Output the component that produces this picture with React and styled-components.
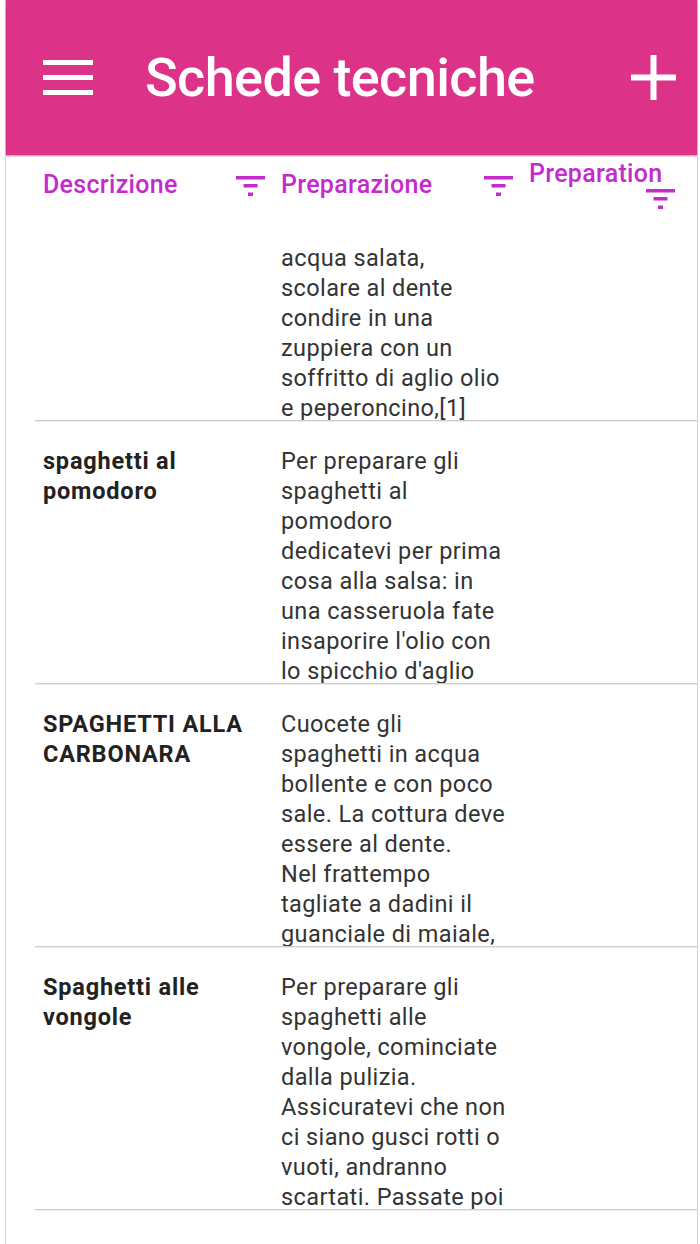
import React from "react";
import styled, { createGlobalStyle } from "styled-components";

const Globale = createGlobalStyle`
    body {
        margin: 0;
        background: #ffffff;
        font-family: Roboto, "Liberation Sans", sans-serif;
    }
`;

// le righe vanno a capo come nell'app originale
const righe = [
    {
        nome: "",
        testo: "Si preparano lessando gli\nspaghetti in abbondante\nacqua salata,\nscolare al dente\ncondire in una\nzuppiera con un\nsoffritto di aglio olio\ne peperoncino,[1]",
        coda: true,
    },
    {
        nome: "spaghetti al pomodoro",
        testo: "Per preparare gli\nspaghetti al\npomodoro\ndedicatevi per prima\ncosa alla salsa: in\nuna casseruola fate\ninsaporire l'olio con\nlo spicchio d'aglio\nsbucciato.",
    },
    {
        nome: "SPAGHETTI ALLA CARBONARA",
        testo: "Cuocete gli\nspaghetti in acqua\nbollente e con poco\nsale. La cottura deve\nessere al dente.\nNel frattempo\ntagliate a dadini il\nguanciale di maiale,\ne fatelo rosolare.",
    },
    {
        nome: "Spaghetti alle vongole",
        testo: "Per preparare gli\nspaghetti alle\nvongole, cominciate\ndalla pulizia.\nAssicuratevi che non\nci siano gusci rotti o\nvuoti, andranno\nscartati. Passate poi\nle vongole.",
    },
];

const IconaFiltro = () => (
    <svg width="29" height="20" viewBox="0 0 29 20">
        <rect x="0" y="0" width="29" height="3.5" fill="currentColor" />
        <rect x="7.5" y="8" width="14" height="3.5" fill="currentColor" />
        <rect x="12" y="16.5" width="5" height="3.5" fill="currentColor" />
    </svg>
);

const IconaMenu = () => (
    <svg width="50" height="35" viewBox="0 0 50 35">
        <rect x="0" y="0" width="50" height="5" fill="#ffffff" />
        <rect x="0" y="15" width="50" height="5" fill="#ffffff" />
        <rect x="0" y="30" width="50" height="5" fill="#ffffff" />
    </svg>
);

const IconaPiu = () => (
    <svg width="45" height="45" viewBox="0 0 45 45">
        <rect x="0" y="19.5" width="45" height="6" fill="#ffffff" />
        <rect x="19.5" y="0" width="6" height="45" fill="#ffffff" />
    </svg>
);

const App = () => {
    return (
        <>
            <Globale />
            <Cornice>
                <Testata>
                    <IconaMenu />
                    <Titolo>Schede tecniche</Titolo>
                    <IconaPiu />
                </Testata>
                <Tabella>
                    <Intestazione>
                        <CellaTitolo>
                            <Etichetta>Descrizione</Etichetta>
                            <Filtro><IconaFiltro /></Filtro>
                        </CellaTitolo>
                        <CellaTitolo>
                            <Etichetta>Preparazione</Etichetta>
                            <Filtro><IconaFiltro /></Filtro>
                        </CellaTitolo>
                        <CellaTitolo $ultima>
                            <Etichetta>Preparation</Etichetta>
                            <Filtro><IconaFiltro /></Filtro>
                        </CellaTitolo>
                    </Intestazione>
                    {righe.map((r, i) => (
                        <Riga key={i} $coda={r.coda}>
                            <Nome>{r.nome}</Nome>
                            <Preparazione $coda={r.coda}>
                                <Testo $coda={r.coda}>{r.testo}</Testo>
                            </Preparazione>
                            <div />
                        </Riga>
                    ))}
                </Tabella>
            </Cornice>
        </>
    );
}

const Cornice = styled.div`
    margin: 0 2px 0 5px;
    min-height: 1244px;
    border-left: 1px solid #d4d4d4;
    border-right: 1px solid #d4d4d4;
    box-sizing: border-box;
`;

const Testata = styled.header`
    height: 155px;
    background-color: #dc3288;
    display: flex;
    align-items: center;
    padding: 0 21px 0 37px;
    box-shadow: 0 1px 2px rgba(120, 20, 70, 0.5);
`;

const Titolo = styled.h1`
    flex: 1;
    margin: 0 0 0 52px;
    color: #ffffff;
    font-size: 54px;
    font-weight: 500;
    letter-spacing: -0.6px;
`;

const Tabella = styled.div`
    margin-left: 29px;
`;

const Intestazione = styled.div`
    display: grid;
    grid-template-columns: 238px 248px 1fr;
    align-items: center;
    height: 60px;
`;

const CellaTitolo = styled.div`
    display: flex;
    flex-wrap: wrap;
    align-items: center;
    padding: ${p => p.$ultima ? "0 22px 0 8px" : "0 8px"};
    color: #c42bcc;
`;

const Etichetta = styled.span`
    font-size: 25px;
    font-weight: 500;
    line-height: 26px;
    letter-spacing: 0.3px;
`;

const Filtro = styled.span`
    display: flex;
    margin-left: auto;
    padding-top: 2px;
`;

const Riga = styled.div`
    display: grid;
    grid-template-columns: 238px 248px 1fr;
    padding-top: ${p => p.$coda ? "28px" : "25px"};
    border-bottom: 1px solid #cfcfcf;
    box-shadow: 0 1px 0 #ececec;
    font-size: 23.5px;
    line-height: 30px;
`;

const Nome = styled.div`
    padding: 0 8px;
    font-weight: 700;
    letter-spacing: 0.8px;
    color: #222222;
`;

const Preparazione = styled.div`
    padding: 0 0 0 8px;
    height: ${p => p.$coda ? "177px" : "237px"};
    overflow: hidden;
    display: flex;
    flex-direction: column;
    justify-content: ${p => p.$coda ? "flex-end" : "flex-start"};
    color: #333333;
`;

const Testo = styled.div`
    white-space: pre;
    flex-shrink: 0;
    letter-spacing: 0.4px;
    margin-bottom: ${p => p.$coda ? "-3px" : "0"};
`;

export default App;
